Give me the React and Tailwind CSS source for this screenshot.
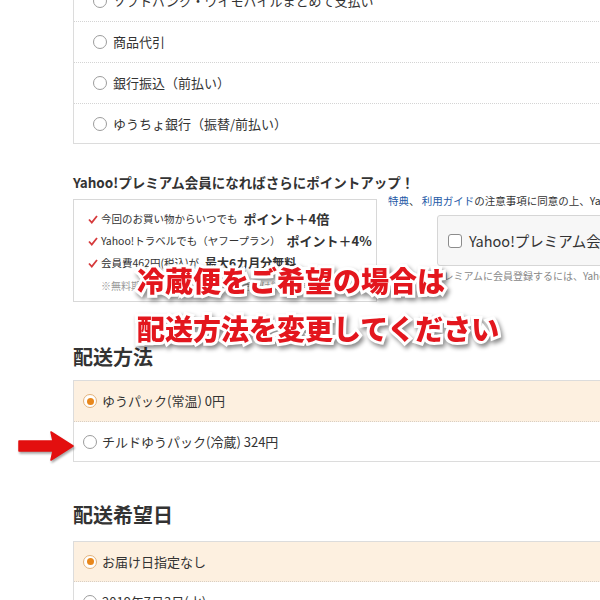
import React from 'react';

const font = "font-['Noto_Sans_CJK_JP','Noto_Sans',sans-serif]";

const Radio = ({ checked }) =>
  checked ? (
    <span className="w-[14px] h-[14px] shrink-0 rounded-full border border-[#e2b27c] bg-white flex items-center justify-center">
      <span className="w-[7px] h-[7px] rounded-full bg-[#e8871c]" />
    </span>
  ) : (
    <span className="w-[14px] h-[14px] shrink-0 rounded-full border border-[#9c9c9c] bg-white" />
  );

const Check = () => (
  <svg width="10" height="9" viewBox="0 0 10 9" className="shrink-0">
    <path d="M1 4.5 L3.8 7.5 L9 1" fill="none" stroke="#d63a3c" strokeWidth="1.8" />
  </svg>
);

const payments = [
  'ソフトバンク・ワイモバイルまとめて支払い',
  '商品代引',
  '銀行振込（前払い）',
  'ゆうちょ銀行（振替/前払い）',
];

const App = () => {
  return (
    <div className={`relative w-[600px] h-[600px] overflow-hidden bg-white text-[#333] ${font}`}>
      <div className="pl-[73px]">
        {/* payment methods */}
        <div className="-mt-[19px] w-[600px] border-l border-b border-[#dcdcdc]">
          {payments.map((p, i) => (
            <div
              key={p}
              className={`flex items-center gap-[6px] pl-[19px] text-[13px] ${
                i < payments.length - 1 ? 'h-[41px] border-b border-dotted border-[#d4d4d4]' : 'h-[39px]'
              }`}
            >
              <Radio />
              <span>{p}</span>
            </div>
          ))}
        </div>

        {/* premium */}
        <h3 className="mt-[28px] text-[13.5px] leading-[20px] font-bold">
          Yahoo!プレミアム会員になればさらにポイントアップ！
        </h3>
        <div className="mt-[7px] flex items-start w-[700px]">
          <div className="w-[304px] h-[103px] shrink-0 border border-[#d8d8d8] pl-[14px] pt-[8px] text-[10.5px] whitespace-nowrap overflow-hidden">
            <div className="h-[22px] flex items-center gap-[3px]">
              <Check />
              <span>今回のお買い物からいつでも</span>
              <b className="text-[13px] ml-[3px]">ポイント＋4倍</b>
            </div>
            <div className="h-[22px] flex items-center gap-[3px]">
              <Check />
              <span>Yahoo!トラベルでも（ヤフープラン）</span>
              <b className="text-[13px] ml-[3px]">ポイント＋4%</b>
            </div>
            <div className="h-[22px] flex items-center gap-[3px]">
              <Check />
              <span>会員費462円(税込)が</span>
              <b className="text-[12px] ml-[3px]">最大6カ月分無料</b>
            </div>
            <div className="h-[22px] flex items-center pl-[13px] text-[10px] text-[#999]">
              ※無料期間中に解約した場合も特典は終了します
            </div>
          </div>
          <div className="ml-[11px] -mt-[6px] shrink-0 whitespace-nowrap">
            <p className="text-[10.5px] leading-[16px]">
              <span className="text-[#1d58a6]">特典</span>、 <span className="text-[#1d58a6]">利用ガイド</span>
              の注意事項に同意の上、Yahoo!プレミアムに登録してください
            </p>
            <div className="mt-[6px] ml-[49px] w-[300px] h-[51px] rounded-[3px] border border-[#d6d6d6] bg-[#f7f7f7] flex items-center pl-[10px] gap-[7px]">
              <span className="w-[14px] h-[14px] rounded-[3px] border border-[#8c8c8c] bg-white" />
              <span className="text-[14.5px]">Yahoo!プレミアム会員に登録する</span>
            </div>
            <p className="mt-[2px] ml-[14px] text-[10px] leading-[16px] text-[#888]">
              Yahoo!プレミアムに会員登録するには、Yahoo! JAPAN IDが必要です
            </p>
          </div>
        </div>

        {/* shipping */}
        <h2 className="mt-[41px] text-[20px] leading-[28px] font-bold">配送方法</h2>
        <div className="mt-[9px] w-[600px] border border-r-0 border-[#dcdcdc]">
          <div className="h-[41px] bg-[#fdf0e0] border-b border-dotted border-[#d8cfc4] flex items-center gap-[5px] pl-[9px] text-[13px]">
            <Radio checked />
            <span>ゆうパック(常温) 0円</span>
          </div>
          <div className="h-[39px] flex items-center gap-[5px] pl-[9px] text-[13px]">
            <Radio />
            <span>チルドゆうパック(冷蔵) 324円</span>
          </div>
        </div>

        <h2 className="mt-[39px] text-[20px] leading-[28px] font-bold">配送希望日</h2>
        <div className="mt-[12px] w-[600px] border border-r-0 border-[#dcdcdc]">
          <div className="h-[40px] bg-[#fdf0e0] border-b border-dotted border-[#d8cfc4] flex items-center gap-[5px] pl-[9px] text-[13px]">
            <Radio checked />
            <span>お届け日指定なし</span>
          </div>
          <div className="h-[40px] flex items-center gap-[5px] pl-[9px] text-[13px]">
            <Radio />
            <span>2019年7月3日(水)</span>
          </div>
        </div>
      </div>

      {/* annotation overlay */}
      <div className="absolute left-[137px] top-[256px] text-[28px] leading-[48px] font-black text-[#e3161d] whitespace-nowrap [-webkit-text-stroke:6px_#ffffff] [paint-order:stroke_fill] drop-shadow-[2px_3px_2px_rgba(0,0,0,0.45)]">
        <div>冷蔵便をご希望の場合は</div>
        <div>配送方法を変更してください</div>
      </div>

      <svg
        className="absolute left-[16px] top-[430px] drop-shadow-[1px_2px_1px_rgba(0,0,0,0.35)]"
        width="60"
        height="32"
        viewBox="0 0 60 32"
      >
        <path d="M3 11 L37 11 L35 2 L57 16 L35 30 L37 21 L3 21 Z" fill="#e30f0f" stroke="#e30f0f" strokeWidth="1.5" strokeLinejoin="round" />
      </svg>
    </div>
  );
};

export default App;
